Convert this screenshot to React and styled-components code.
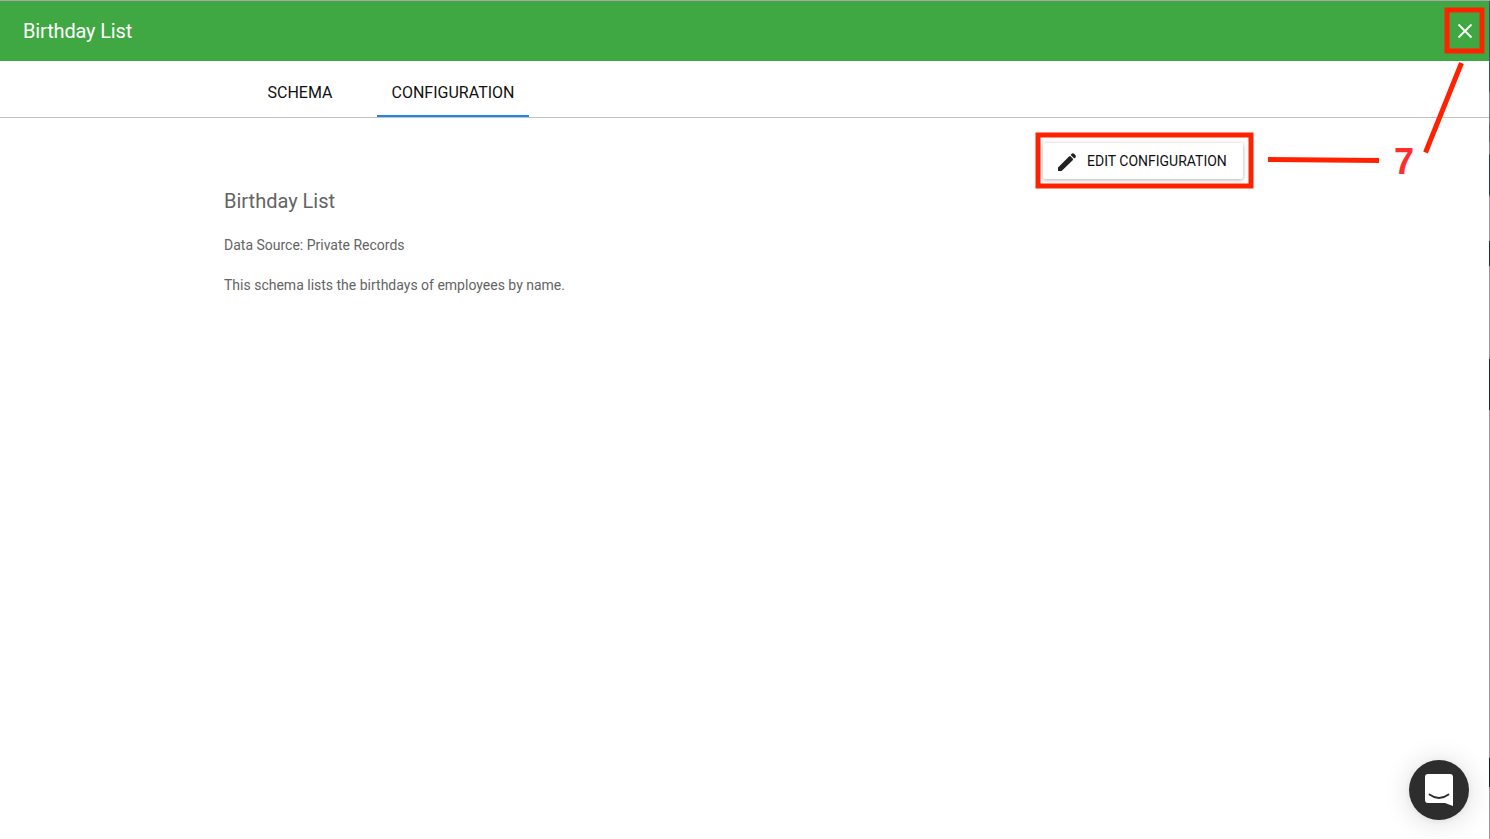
import React from "react";
import styled, { createGlobalStyle } from "styled-components";

const GlobalStyle = createGlobalStyle`
  * { box-sizing: border-box; }
  body { margin: 0; background: #fff; font-family: Roboto, sans-serif; overflow: hidden; }
`;

const Page = styled.div`
  position: relative;
  display: flex;
  flex-direction: column;
  width: 1490px;
  height: 839px;
  background: #fff;
  border-top: 1px solid #a9a9a9;
`;

const Header = styled.header`
  display: flex;
  align-items: center;
  justify-content: space-between;
  height: 60px;
  padding: 0 13px 0 23px;
  background: #40a842;
  color: #fff;
`;

const HeaderTitle = styled.h1`
  margin: 0;
  font-size: 20px;
  font-weight: 400;
  line-height: 24px;
  letter-spacing: -0.15px;
`;

const CloseButton = styled.button`
  display: flex;
  padding: 0;
  border: 0;
  background: none;
  color: #fff;
`;

const Icon = styled.svg`
  display: block;
  width: 24px;
  height: 24px;
  fill: currentColor;
`;

const TabBar = styled.nav`
  display: flex;
  height: 57px;
  padding-left: 223px;
  border-bottom: 1px solid #c2c2c2;
`;

const Tab = styled.button`
  width: ${(p) => p.$width}px;
  height: 56px;
  padding: 10px 0 0;
  border: 0;
  border-bottom: 2px solid ${(p) => (p.$active ? "#1e88e5" : "transparent")};
  background: none;
  color: #111;
  font: 400 16px/20px Roboto, sans-serif;
`;

const Content = styled.main`
  display: flex;
  flex-direction: column;
  width: 1020px;
  margin: 25px 0 0 223px;
  padding-left: 1px;
  color: #646464;
`;

const EditButton = styled.button`
  display: flex;
  align-items: center;
  align-self: flex-end;
  gap: 8px;
  width: 200px;
  height: 36px;
  padding: 0 12px;
  border: 0;
  border-radius: 2px;
  background: #fff;
  box-shadow: 0 1px 4px rgba(0, 0, 0, 0.32);
  color: #111;
  font: 400 14px/20px Roboto, sans-serif;
  white-space: nowrap;

  svg {
    margin-top: 2px;
    color: #222;
  }
`;

const Title = styled.h2`
  margin: 10px 0 0;
  font-size: 20px;
  font-weight: 400;
  line-height: 24px;
`;

const Line = styled.p`
  margin: ${(p) => p.$gap}px 0 0;
  font-size: 14px;
  line-height: 20px;
`;

const Edge = styled.div`
  position: absolute;
  top: 0;
  right: 0;
  width: 1px;
  height: 838px;
  background: linear-gradient(#2c5874 0 90px, #6a8498 92px 122px, #4a6680 124px 140px, #7e8ea0 142px 153px, #0a4468 154px 193px, #9496a4 196px 240px, #003a5c 240px 265px, #9496a4 265px 358px, #003050 358px 409px, #9496a4 409px 757px, #002640 757px 786px, #9496a4 786px);
`;

const Chat = styled.button`
  position: absolute;
  left: 1409px;
  top: 759px;
  width: 60px;
  height: 60px;
  padding: 0;
  border: 0;
  border-radius: 50%;
  background: #2d2d2d;
  box-shadow: 0 1px 6px rgba(0, 0, 0, 0.06), 0 2px 28px rgba(0, 0, 0, 0.14);
`;

const Annotations = styled.svg`
  position: absolute;
  top: -1px;
  left: 0;
  pointer-events: none;
`;

const Step = styled.span`
  position: absolute;
  left: 1394px;
  top: 141px;
  color: #ff2d2d;
  font: 700 36px/40px "Liberation Sans", Arial, sans-serif;
`;

export default function App() {
  return (
    <Page>
      <GlobalStyle />
      <Header>
        <HeaderTitle>Birthday List</HeaderTitle>
        <CloseButton aria-label="Close">
          <Icon viewBox="0 0 24 24">
            <path d="M5.500 5.500 18.500 18.500M18.500 5.500 5.500 18.500" stroke="#fff" strokeWidth="1.8" />
          </Icon>
        </CloseButton>
      </Header>
      <TabBar>
        <Tab $width={154}>SCHEMA</Tab>
        <Tab $width={152} $active>CONFIGURATION</Tab>
      </TabBar>
      <Content>
        <EditButton>
          <Icon viewBox="0 0 24 24">
            <path d="M3 17.600V21h3.600L17.700 10.200Q18.500 9.300 17.700 8.500L15.800 6.500Q14.900 5.700 14 6.500zM15.600 4.900 16.700 3.700Q17.700 2.700 18.800 3.600L20.500 5.300Q21.400 6.400 20.500 7.400L19.300 8.500z" />
          </Icon>
          EDIT CONFIGURATION
        </EditButton>
        <Title>Birthday List</Title>
        <Line $gap={22}>Data Source: Private Records</Line>
        <Line $gap={20}>This schema lists the birthdays of employees by name.</Line>
      </Content>
      <Edge />
      <Chat aria-label="Chat">
        <svg width="60" height="60" viewBox="0 0 60 60">
          <path d="M19 14h22a3 3 0 0 1 3 3v29l-8-3H19a3 3 0 0 1-3-3V17a3 3 0 0 1 3-3z" fill="#fff" />
          <path d="M20.500 34.500q9.500 7 19 0" fill="none" stroke="#2d2d2d" strokeWidth="1.8" strokeLinecap="round" />
        </svg>
      </Chat>
      <Annotations width="1490" height="839" fill="none" stroke="#ff2200" strokeWidth="5">
        <rect x="1038" y="135" width="213" height="51" />
        <rect x="1447" y="10" width="35" height="41" />
        <path d="M1268 159.500 1379 160.500M1461.500 63 1425.500 152.500" />
      </Annotations>
      <Step>7</Step>
    </Page>
  );
}
